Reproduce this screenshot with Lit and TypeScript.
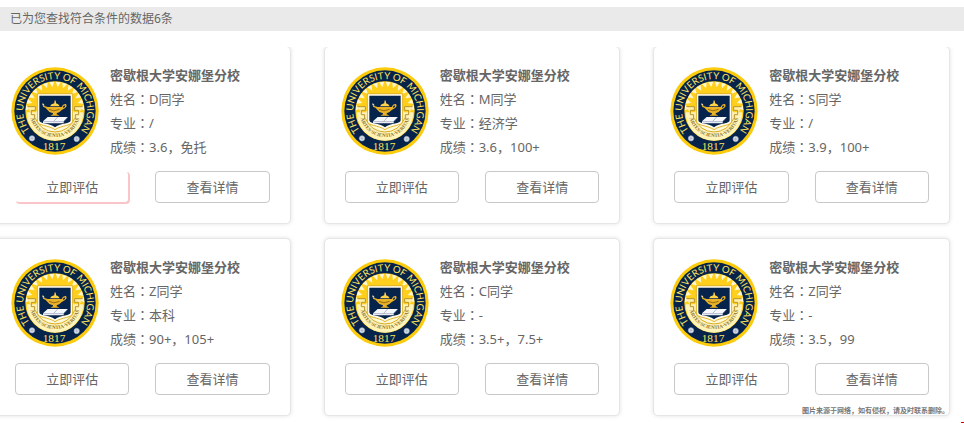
import { LitElement, html, css } from "lit";
import { customElement, property } from "lit/decorators.js";

interface Offer {
  school: string;
  name: string;
  major: string;
  score: string;
}

const school = "密歇根大学安娜堡分校";
const offers: Offer[] = [
  { school, name: "D同学", major: "/", score: "3.6，免托" },
  { school, name: "M同学", major: "经济学", score: "3.6，100+" },
  { school, name: "S同学", major: "/", score: "3.9，100+" },
  { school, name: "Z同学", major: "本科", score: "90+，105+" },
  { school, name: "C同学", major: "-", score: "3.5+，7.5+" },
  { school, name: "Z同学", major: "-", score: "3.5，99" },
];

/* Pale gaps between the sun's rays, fanned over the upper half of the disc. */
const rays = Array.from({ length: 14 }, (_, i) => {
  const mid = Math.PI + ((i + 0.5) * Math.PI) / 14;
  const half = 0.085;
  const p = (a: number, r: number) =>
    `${(Math.cos(a) * r).toFixed(1)} ${(Math.sin(a) * r).toFixed(1)}`;
  return `M${p(mid - half, 88)}L${p(mid, 72)}L${p(mid + half, 88)}Z`;
}).join("");

@customElement("school-seal")
export class SchoolSeal extends LitElement {
  static styles = css`
    :host {
      display: block;
      width: 88px;
      height: 88px;
    }
    svg {
      display: block;
      width: 100%;
      height: 100%;
    }
    text {
      text-anchor: middle;
    }
    .ring {
      font-family: "Lato", sans-serif;
      font-size: 29px;
      fill: #ffe45c;
    }
    .year {
      font-family: "Liberation Serif", serif;
      font-size: 34px;
      fill: #ffe45c;
    }
    .motto {
      font-family: "Liberation Serif", serif;
      font-size: 15px;
      font-weight: bold;
      fill: #8a742c;
    }
  `;

  render() {
    return html`<svg viewBox="-132 -132 264 264" role="img" aria-label="University of Michigan">
      <defs>
        <path id="ring" d="M0 96A96 96 0 1 1 1 96" />
        <path id="motto" d="M-76 2A76 76 0 0 0 76 2" />
      </defs>
      <circle r="131" fill="#fbcb0c" />
      <circle r="122" fill="#06234c" />
      <circle r="89" fill="#ffcf1c" />
      <path d=${rays} fill="#fff7cf" />
      <path d="M-85 4H85A85 85 0 0 1-85 4Z" fill="#fff3b8" />
      <path d="M-56 30A64 64 0 0 0 56 30V0H-56Z" fill="#fff9dc" />
      <path d="M-59 22A63 63 0 0 0 59 22" fill="none" stroke="#d9ad1e" stroke-width="3" />
      <path
        d="M-83-13h24v11h-12v13h10v14M83-13H59V-2h12v13H61v14"
        fill="#fff0a8" stroke="#b8952a" stroke-width="3"
      />
      <text class="motto"><textPath href="#motto" startOffset="50%">ARTES·SCIENTIA·VERITAS</textPath></text>
      <path
        d="M-53-52H53V30C53 45 20 42 0 56C-20 42-53 45-53 30Z"
        fill="#fffbe8" stroke="#e0b424" stroke-width="3"
      />
      <path d="M-47-46H47V28C47 39 18 36 0 49C-18 36-47 39-47 28Z" fill="#06234c" />
      <path
        d="M-36-18Q-30-13-22-12H20Q24-23 33-21Q38-14 29-8Q24-5 19-2Q13 6 5 7V10L14 14H-14L-6 10V7Q-18 5-23-4Q-28-11-36-13Z"
        fill="#eab226"
      />
      <path d="M-15-14Q-12-21-2-23V-27L0-34L3-27V-23Q11-21 14-14Z" fill="#ffd34a" />
      <path d="M24-13Q27-18 31-16Q31-12 24-9Z" fill="#06234c" />
      <path d="M-18-5Q-4 4 14-5" fill="none" stroke="#966c16" stroke-width="3" />
      <path d="M-37-24L-31-17H-38Z" fill="#fff1a8" />
      <path d="M-36 31L-22 18H38L26 31V37H-36Z" fill="#f6f7fb" />
      <path d="M-36 32H26L38 19M-4 31L8 18" fill="none" stroke="#8d9bb7" stroke-width="2" />
      <text class="ring"><textPath href="#ring" startOffset="50%">THE UNIVERSITY OF MICHIGAN</textPath></text>
      <text class="year" x="-3" y="116">1817</text>
      <g fill="#dfe5ee" stroke="#9aa7bd" stroke-width="2">
        <circle cx="-69" cy="82" r="8" />
        <circle cx="65" cy="84" r="8" />
        <path d="M-69 77V87M-74 82H-64M65 79V89M60 84H70" />
      </g>
    </svg>`;
  }
}

@customElement("offer-card")
export class OfferCard extends LitElement {
  @property({ attribute: false }) offer!: Offer;
  @property({ type: Boolean }) active = false;

  static styles = css`
    :host {
      display: flex;
      flex-direction: column;
      gap: 12px;
      box-sizing: border-box;
      padding: 16px 20px 20px;
      border: 1px solid #e6e6e6;
      border-radius: 5px;
      background: #fff;
      box-shadow: 0 0 4px rgba(0, 0, 0, 0.12);
    }
    .top {
      display: flex;
      align-items: center;
      gap: 11px;
      margin-left: -4px;
    }
    school-seal {
      flex: none;
    }
    h3,
    dl,
    dd {
      margin: 0;
    }
    h3 {
      font-size: 13px;
      line-height: 24px;
    }
    dl div {
      display: flex;
      line-height: 24px;
    }
    .colon {
      font-family: "Noto Sans CJK TC", sans-serif;
    }
    .actions {
      display: grid;
      grid-template-columns: 1fr 1fr;
      gap: 26px;
    }
    button {
      height: 32px;
      padding: 0;
      border: 1px solid #c8c8c8;
      border-radius: 4px;
      background: #fff;
      color: inherit;
      font: inherit;
      cursor: pointer;
    }
    .active {
      border-color: #fff #f9c5c9 #f9c5c9 #fff;
      box-shadow: 1px 1px 0 #f9c5c9;
    }
  `;

  private row(label: string, value: string) {
    return html`<div><dt>${label}<span class="colon" lang="zh-TW">：</span></dt><dd>${value}</dd></div>`;
  }

  render() {
    const o = this.offer;
    return html`
      <div class="top">
        <school-seal></school-seal>
        <div>
          <h3>${o.school}</h3>
          <dl>${this.row("姓名", o.name)}${this.row("专业", o.major)}${this.row("成绩", o.score)}</dl>
        </div>
      </div>
      <div class="actions">
        <button class=${this.active ? "active" : ""}>立即评估</button>
        <button>查看详情</button>
      </div>
    `;
  }
}

@customElement("app-root")
export class AppRoot extends LitElement {
  static styles = css`
    :host {
      display: block;
      position: relative;
      padding: 7px 0 2px;
      overflow: hidden;
      background: #fff;
      color: #666;
      font: 13px/24px "Noto Sans", "Noto Sans CJK SC", sans-serif;
    }
    .summary {
      margin: 0 0 16px;
      padding: 0 10px;
      background: #eaeaea;
      font-size: 12px;
    }
    .results {
      overflow: hidden;
    }
    .grid {
      display: grid;
      grid-template-columns: repeat(3, minmax(0, 1fr));
      gap: 14px 33px;
      margin: -1px 14px 6px -6px;
    }
    .credit {
      position: absolute;
      right: 15px;
      bottom: 6px;
      margin: 0;
      color: #777;
      font-size: 7px;
      font-weight: bold;
      line-height: 14px;
    }
    .corner {
      position: absolute;
      right: 0;
      bottom: 0;
      width: 3px;
      height: 2px;
      background: #c00;
    }
  `;

  render() {
    return html`
      <p class="summary">已为您查找符合条件的数据6条</p>
      <div class="results">
        <div class="grid">
          ${offers.map((o, i) => html`<offer-card .offer=${o} ?active=${i === 0}></offer-card>`)}
        </div>
      </div>
      <p class="credit">图片来源于网络，如有侵权，请及时联系删除。</p>
      <span class="corner"></span>
    `;
  }
}
